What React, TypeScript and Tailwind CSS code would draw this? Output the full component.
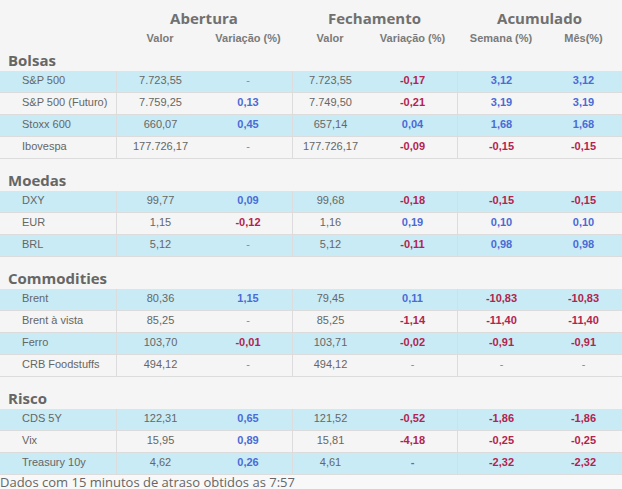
import React from "react"

type Row = {
  name: string
  cells: string[]
  blueDash?: number[]
}

type Section = {
  title: string
  rows: Row[]
}

const sections: Section[] = [
  {
    title: "Bolsas",
    rows: [
      { name: "S&P 500", cells: ["7.723,55", "-", "7.723,55", "-0,17", "3,12", "3,12"] },
      { name: "S&P 500 (Futuro)", cells: ["7.759,25", "0,13", "7.749,50", "-0,21", "3,19", "3,19"] },
      { name: "Stoxx 600", cells: ["660,07", "0,45", "657,14", "0,04", "1,68", "1,68"] },
      { name: "Ibovespa", cells: ["177.726,17", "-", "177.726,17", "-0,09", "-0,15", "-0,15"] },
    ],
  },
  {
    title: "Moedas",
    rows: [
      { name: "DXY", cells: ["99,77", "0,09", "99,68", "-0,18", "-0,15", "-0,15"] },
      { name: "EUR", cells: ["1,15", "-0,12", "1,16", "0,19", "0,10", "0,10"] },
      { name: "BRL", cells: ["5,12", "-", "5,12", "-0,11", "0,98", "0,98"] },
    ],
  },
  {
    title: "Commodities",
    rows: [
      { name: "Brent", cells: ["80,36", "1,15", "79,45", "0,11", "-10,83", "-10,83"] },
      { name: "Brent à vista", cells: ["85,25", "-", "85,25", "-1,14", "-11,40", "-11,40"] },
      { name: "Ferro", cells: ["103,70", "-0,01", "103,71", "-0,02", "-0,91", "-0,91"] },
      { name: "CRB Foodstuffs", cells: ["494,12", "-", "494,12", "-", "-", "-"] },
    ],
  },
  {
    title: "Risco",
    rows: [
      { name: "CDS 5Y", cells: ["122,31", "0,65", "121,52", "-0,52", "-1,86", "-1,86"] },
      { name: "Vix", cells: ["15,95", "0,89", "15,81", "-4,18", "-0,25", "-0,25"] },
      { name: "Treasury 10y", cells: ["4,62", "0,26", "4,61", "-", "-2,32", "-2,32"], blueDash: [3] },
    ],
  },
]

const grid = "grid grid-cols-[116px_88px_88px_76px_89px_88px_77px]"
const heading = "font-['Open_Sans',sans-serif] font-bold text-[15px] leading-5"

// valor columns (0, 2) are plain; variation columns get colour by sign
function cellClass(value: string, idx: number, blueDash: boolean) {
  if (idx === 0 || idx === 2) return "text-[#666]"
  if (value === "-") return blueDash ? "font-bold text-[#4b6bd6]" : "text-[#888]"
  if (value.startsWith("-")) return "font-bold text-[#b3234f]"
  return "font-bold text-[#4b6bd6]"
}

function DataRow({ row, shaded }: { row: Row; shaded: boolean }) {
  return (
    <div className={`${grid} h-[22px] border-b border-[#dcdcdc] ${shaded ? "bg-[#c9ebf5]" : ""}`}>
      <div className="pl-[22px] text-[#666] leading-[19px] whitespace-nowrap">{row.name}</div>
      {row.cells.map((v, i) => (
        <div
          key={i}
          className={`text-center leading-[19px] whitespace-nowrap ${cellClass(v, i, !!row.blueDash?.includes(i))} ${
            i === 0 || i === 2 || i === 4 ? "border-l border-[#dcdcdc]" : ""
          }`}
        >
          {v}
        </div>
      ))}
    </div>
  )
}

export default function App() {
  return (
    <div className="w-[622px] h-[489px] overflow-hidden bg-[#f4f5f4] font-['Liberation_Sans',Arial,sans-serif] text-[11px]">
      {/* Column headers */}
      <div className={`${grid} pt-2`}>
        <div />
        <div className={`col-span-2 text-center text-[#707070] ${heading}`}>Abertura</div>
        <div className={`col-span-2 text-center text-[#707070] ${heading}`}>Fechamento</div>
        <div className={`col-span-2 text-center text-[#707070] ${heading}`}>Acumulado</div>
        <div className="mt-[3px]" />
        {["Valor", "Variação (%)", "Valor", "Variação (%)", "Semana (%)", "Mês(%)"].map((h, i) => (
          <div key={i} className="mt-[3px] text-center font-bold text-[#7a7a7a] leading-[14px] whitespace-nowrap">
            {h}
          </div>
        ))}
      </div>

      {sections.map((s, si) => (
        <div key={s.title}>
          <div className={`${si === 0 ? "pt-[5px]" : "pt-[11px]"} pb-px pl-2 text-[#666] ${heading}`}>{s.title}</div>
          {s.rows.map((r, ri) => (
            <DataRow key={r.name} row={r} shaded={ri % 2 === 0} />
          ))}
        </div>
      ))}

      <div className="bg-[#f8f8f8] font-['Open_Sans',sans-serif] text-[13px] leading-[14px] text-[#666] whitespace-nowrap">
        Dados com 15 minutos de atraso obtidos as 7:57
      </div>
    </div>
  )
}
